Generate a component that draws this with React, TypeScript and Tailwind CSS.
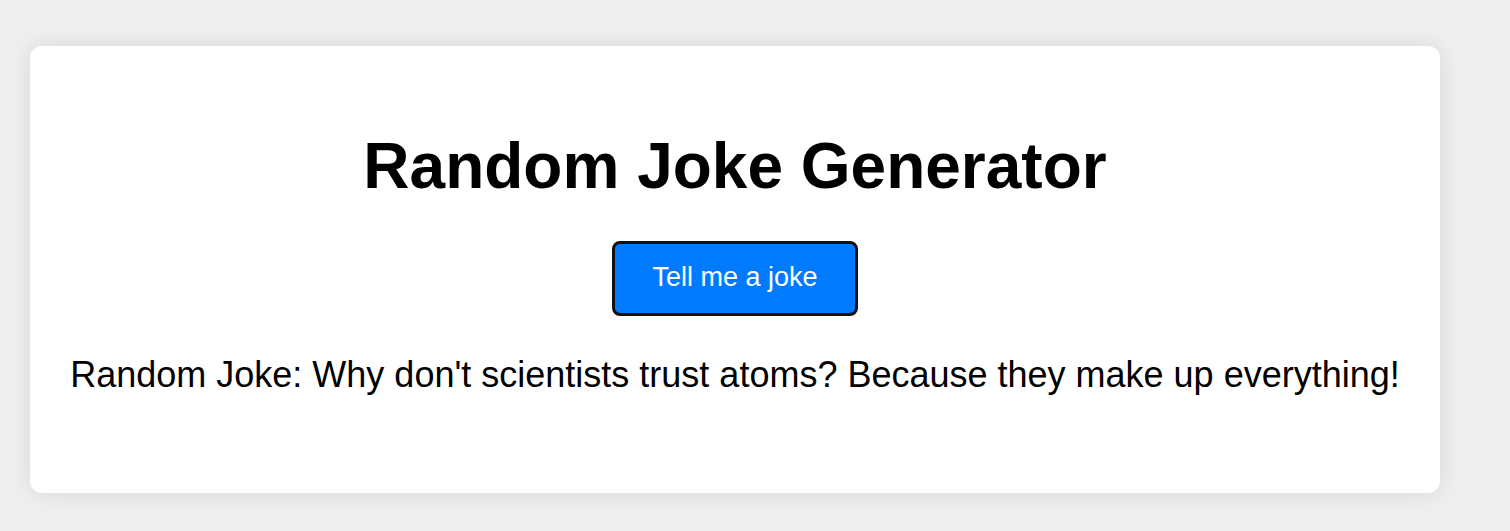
import React, { useState } from "react";

const jokes = [
  "Why don't scientists trust atoms? Because they make up everything!",
  "Why did the scarecrow win an award? Because he was outstanding in his field!",
  "I told my wife she was drawing her eyebrows too high. She looked surprised.",
];

export default function App() {
  const [joke, setJoke] = useState(jokes[0]);

  const nextJoke = () => {
    const i = Math.floor(Math.random() * jokes.length);
    setJoke(jokes[i]);
  };

  return (
    <div className="min-h-[531px] bg-[#efefef] pt-[46px] pl-[30px] font-['Liberation_Sans',Arial,sans-serif] text-black">
      <div className="w-[1410px] rounded-[12px] bg-white pt-[83px] pb-[98px] text-center shadow-[0_0_24px_rgba(0,0,0,0.1)]">
        <h1 className="text-[64px] leading-[74px] font-bold">Random Joke Generator</h1>
        <button
          onClick={nextJoke}
          className="mt-[38px] h-[75px] w-[246px] rounded-[8px] border-[3px] border-[#111] bg-[#007bff] pb-[3px] text-[27px] text-white"
        >
          Tell me a joke
        </button>
        <p className="mt-[38px] text-[36px] leading-[41px]">Random Joke: {joke}</p>
      </div>
    </div>
  );
}
